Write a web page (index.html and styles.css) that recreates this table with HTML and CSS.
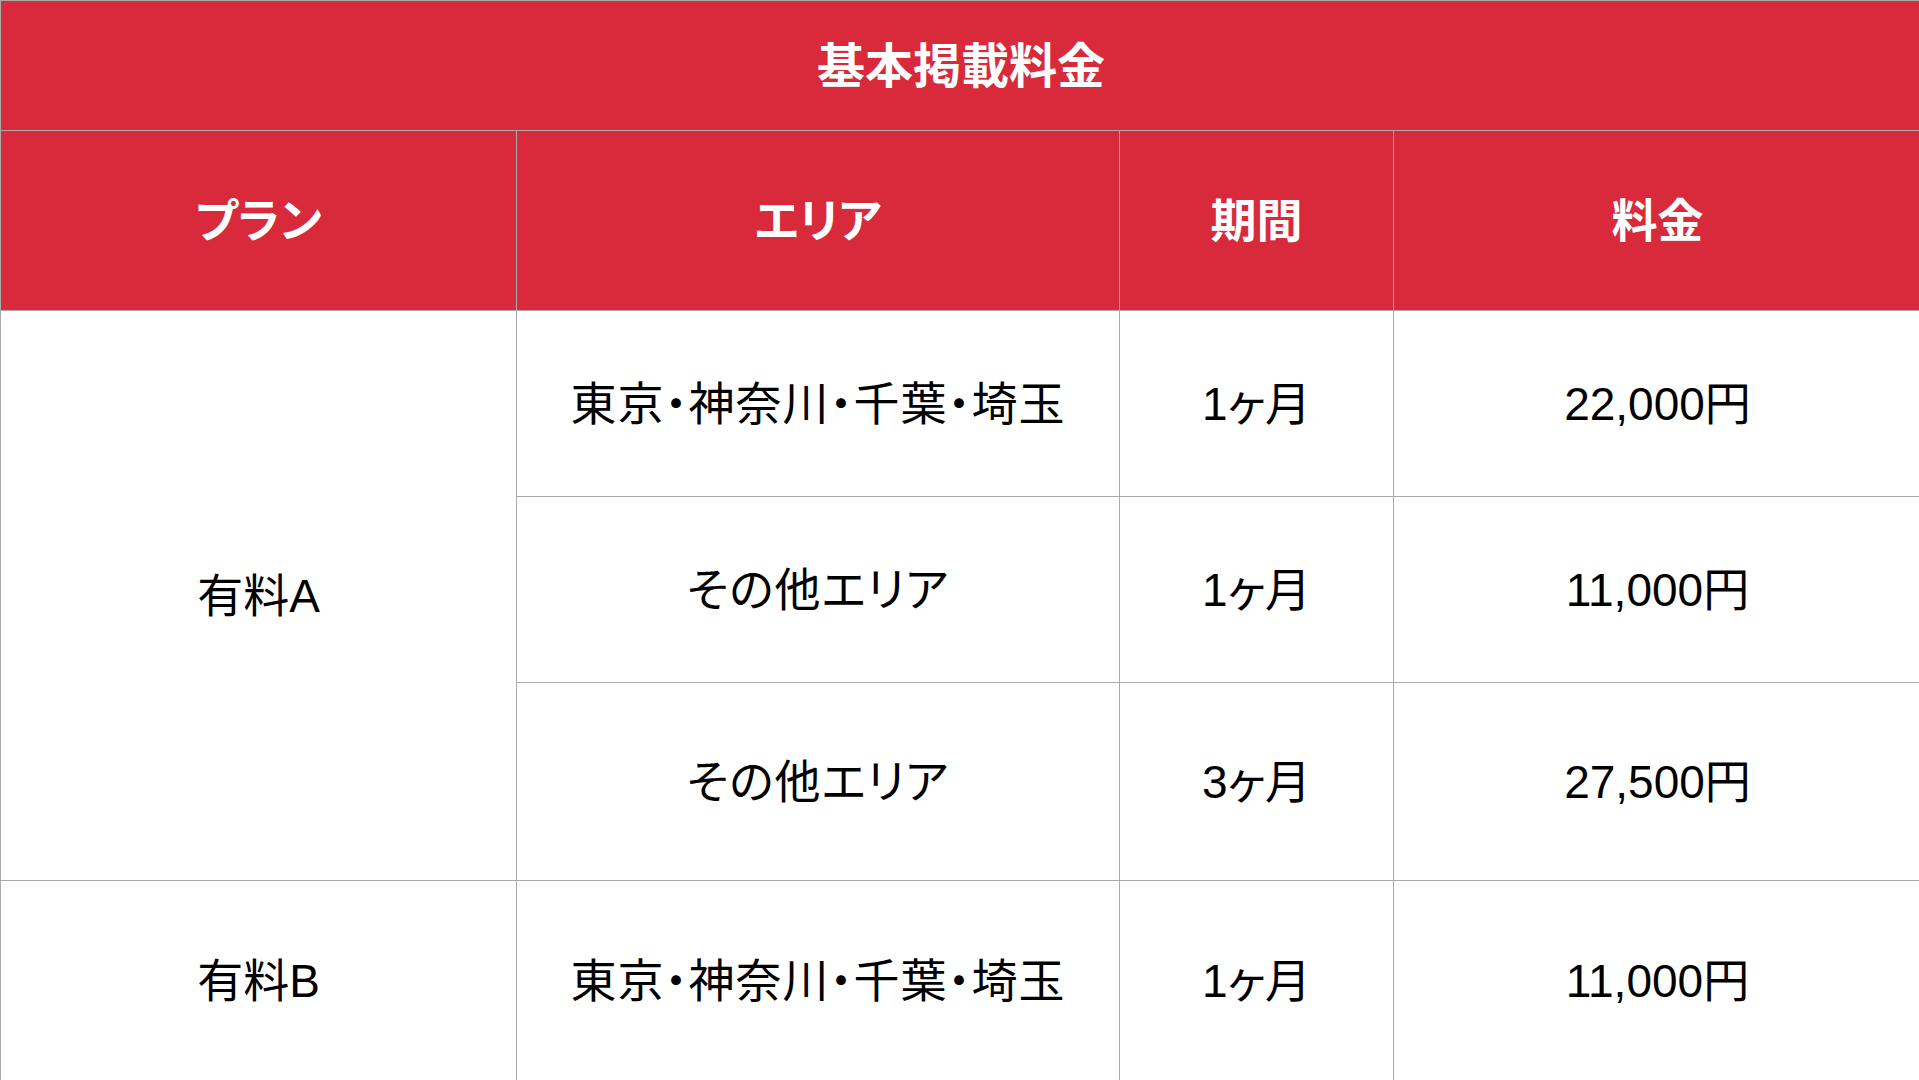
FILE: index.html
```html
<!DOCTYPE html>
<html lang="ja">
<head>
<meta charset="utf-8">
<title>基本掲載料金</title>
<link rel="stylesheet" href="styles.css">
</head>
<body>
<table class="price-table">
  <colgroup>
    <col class="col-plan">
    <col class="col-area">
    <col class="col-term">
    <col class="col-price">
  </colgroup>
  <thead>
    <tr class="row-title">
      <th colspan="4" class="title">基本掲載料金</th>
    </tr>
    <tr class="row-head">
      <th>プラン</th>
      <th>エリア</th>
      <th>期間</th>
      <th>料金</th>
    </tr>
  </thead>
  <tbody>
    <tr class="row-a1">
      <td rowspan="3">有料A</td>
      <td class="area">東京・神奈川・千葉・埼玉</td>
      <td>1ヶ月</td>
      <td>22,000円</td>
    </tr>
    <tr class="row-a2">
      <td class="area">その他エリア</td>
      <td>1ヶ月</td>
      <td>11,000円</td>
    </tr>
    <tr class="row-a3">
      <td class="area">その他エリア</td>
      <td>3ヶ月</td>
      <td>27,500円</td>
    </tr>
    <tr class="row-b">
      <td>有料B</td>
      <td class="area">東京・神奈川・千葉・埼玉</td>
      <td>1ヶ月</td>
      <td>11,000円</td>
    </tr>
  </tbody>
</table>
</body>
</html>
```
FILE: styles.css
```css
html, body {
  margin: 0;
  padding: 0;
  background: #ffffff;
  overflow: hidden;
}

body {
  font-family: "Liberation Sans", "Noto Sans CJK JP", sans-serif;
  color: #000000;
}

.price-table {
  border-collapse: collapse;
  table-layout: fixed;
  width: 1921px;
  font-feature-settings: "palt";
}

.col-plan { width: 516px; }
.col-area { width: 603px; }
.col-term { width: 274px; }
.col-price { width: 528px; }

.price-table th,
.price-table td {
  border: 1px solid #aaaaaa;
  padding: 0 0 8px 0;
  text-align: center;
  vertical-align: middle;
  white-space: nowrap;
}

.price-table th {
  background: #d82a3a;
  color: #ffffff;
  font-weight: 700;
  font-size: 46px;
}

.price-table th.title {
  font-size: 48px;
  height: 121px;
}

.row-head th {
  height: 171px;
}

.price-table td {
  font-size: 46px;
  font-weight: 400;
}

.price-table td.area {
  letter-spacing: 1px;
}

.row-a1 td { height: 177px; }
.row-a2 td { height: 177px; }
.row-a3 td { height: 189px; }
.row-b td { height: 192px; }
```
